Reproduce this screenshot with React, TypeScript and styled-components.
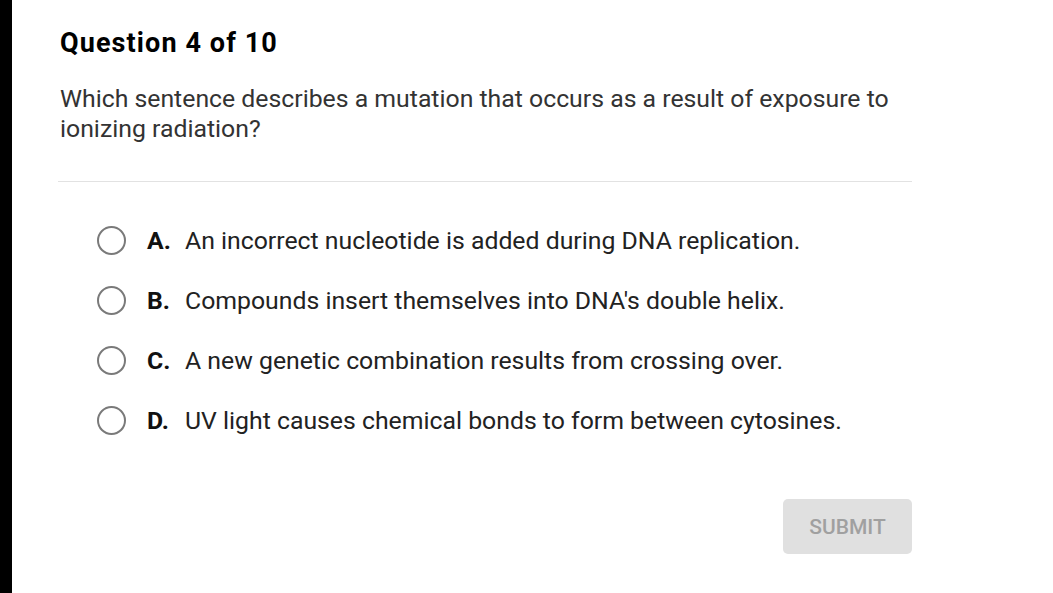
import React from "react";
import styled, { createGlobalStyle } from "styled-components";

const Global = createGlobalStyle`
  html, body { margin: 0; padding: 0; background: #fff; }
  body { font-family: Roboto, "Noto Sans", Arial, sans-serif; }
`;

const Page = styled.div`
  display: flex;
  width: 1053px;
  height: 593px;
  background: #fff;
  overflow: hidden;
`;

const EdgeStrip = styled.div`
  width: 12px;
  flex: 0 0 12px;
  background: #000;
`;

const Content = styled.main`
  width: 854px;
  padding: 28px 0 0 46px;
  display: flex;
  flex-direction: column;
`;

const Title = styled.h1`
  margin: 0;
  padding-left: 2px;
  font-size: 27px;
  line-height: 30px;
  font-weight: 700;
  letter-spacing: 1.1px;
  color: #000;
`;

const Prompt = styled.p`
  margin: 26px 0 0;
  padding-left: 2px;
  font-size: 24.8px;
  line-height: 30px;
  color: #333;
  max-width: 840px;
`;

const Divider = styled.hr`
  margin: 37px 0 0;
  border: none;
  border-top: 1px solid #e2e2e2;
  width: 854px;
`;

const Options = styled.ul`
  list-style: none;
  margin: 43px 0 0;
  padding: 0 0 0 39px;
  display: flex;
  flex-direction: column;
  gap: 30px;
`;

const Option = styled.li`
  display: flex;
  align-items: center;
  height: 30px;
`;

const Radio = styled.span`
  box-sizing: border-box;
  width: 29px;
  height: 29px;
  border-radius: 50%;
  border: 2.5px solid #7a7a7a;
  flex: 0 0 auto;
`;

const Letter = styled.span`
  margin-left: 21px;
  font-weight: 700;
  font-size: 24.8px;
  color: #111;
  width: 38px;
`;

const OptionText = styled.span`
  font-size: 24.8px;
  color: #222;
`;

const Footer = styled.div`
  display: flex;
  justify-content: flex-end;
  margin-top: 64px;
`;

const SubmitButton = styled.button`
  width: 129px;
  height: 55px;
  border: none;
  border-radius: 5px;
  background: #e0e0e0;
  color: #a0a0a0;
  font-family: Roboto, Arial, sans-serif;
  font-size: 21px;
  font-weight: 500;
`;

const options = [
  { letter: "A.", text: "An incorrect nucleotide is added during DNA replication." },
  { letter: "B.", text: "Compounds insert themselves into DNA's double helix." },
  { letter: "C.", text: "A new genetic combination results from crossing over." },
  { letter: "D.", text: "UV light causes chemical bonds to form between cytosines." },
];

export default function App() {
  return (
    <Page>
      <Global />
      <EdgeStrip />
      <Content>
        <Title>Question 4 of 10</Title>
        <Prompt>
          Which sentence describes a mutation that occurs as a result of exposure to ionizing radiation?
        </Prompt>
        <Divider />
        <Options>
          {options.map((o) => (
            <Option key={o.letter}>
              <Radio />
              <Letter>{o.letter}</Letter>
              <OptionText>{o.text}</OptionText>
            </Option>
          ))}
        </Options>
        <Footer>
          <SubmitButton>SUBMIT</SubmitButton>
        </Footer>
      </Content>
    </Page>
  );
}
